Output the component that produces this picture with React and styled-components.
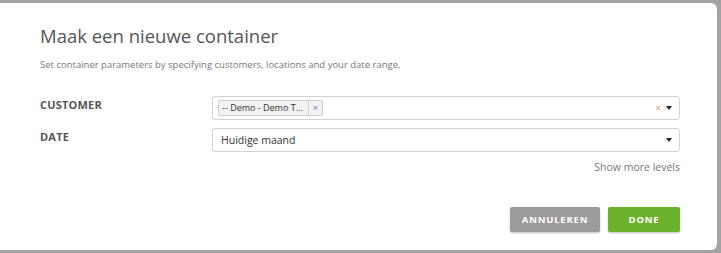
import React from "react";
import styled, { createGlobalStyle } from "styled-components";

const Global = createGlobalStyle`
  html, body { margin: 0; padding: 0; background: #a3a3a3; overflow: hidden; }
  body { font-family: "Open Sans", "Noto Sans", sans-serif; }
`;

const Backdrop = styled.div`
  width: 721px;
  height: 253px;
  background: #a3a3a3;
  padding-top: 3px;
  box-sizing: border-box;
`;

const Modal = styled.div`
  margin-left: -8px;
  width: 725px;
  height: 247px;
  background: #fff;
  border-radius: 6px;
  box-sizing: border-box;
  padding: 21px 37px 0 48px;
  display: flex;
  flex-direction: column;
`;

const Title = styled.h1`
  margin: 0;
  font-size: 18.5px;
  font-weight: 400;
  color: #555;
  line-height: 24px;
`;

const Subtitle = styled.p`
  margin: 10px 0 0;
  font-size: 9.5px;
  color: #777;
  line-height: 14px;
`;

const Form = styled.div`
  margin-top: 24px;
  display: flex;
  flex-direction: column;
  gap: 8px;
`;

const Row = styled.div`
  display: flex;
  align-items: flex-start;
`;

const Label = styled.label`
  width: 172px;
  padding-top: 1px;
  line-height: 15px;
  font-size: 11px;
  font-weight: 700;
  color: #555;
  letter-spacing: 0.2px;
  text-transform: uppercase;
`;

const Select = styled.div`
  flex: 1;
  height: 24px;
  box-sizing: border-box;
  border: 1px solid #d3d3d3;
  border-radius: 3px;
  display: flex;
  align-items: center;
  padding: 0 6px 0 ${(p) => (p.$tags ? "5px" : "8px")};
  font-size: 10.5px;
  color: #333;
`;

const Value = styled.span`
  flex: 1;
`;

const Tag = styled.span`
  display: flex;
  align-items: center;
  height: 16px;
  box-sizing: border-box;
  border: 1px solid #d0d0d0;
  border-radius: 2px;
  background: #f2f2f2;
  font-size: 9px;
  color: #333;
`;

const TagText = styled.span`
  padding: 0 5px 0 3px;
  line-height: 14px;
  border-right: 1px solid #d0d0d0;
`;

const TagX = styled.span`
  padding: 0 4px;
  color: #5a8fc7;
  font-size: 9px;
  line-height: 14px;
`;

const Spacer = styled.span`
  flex: 1;
`;

const Clear = styled.span`
  color: #c9a86a;
  font-size: 10px;
  margin-right: 5px;
`;

const Caret = styled.span`
  width: 0;
  height: 0;
  border-left: 3.5px solid transparent;
  border-right: 3.5px solid transparent;
  border-top: 4px solid #222;
  margin-right: 1px;
`;

const More = styled.div`
  margin-top: 8px;
  text-align: right;
  font-size: 10.5px;
  color: #777;
`;

const Footer = styled.div`
  margin-top: 33px;
  display: flex;
  justify-content: flex-end;
  gap: 8px;
`;

const Button = styled.button`
  height: 25px;
  width: ${(p) => p.$w}px;
  border: none;
  border-radius: 2px;
  background: ${(p) => p.$bg};
  color: #fff;
  font-family: "Open Sans", sans-serif;
  font-size: 9.5px;
  font-weight: 700;
  letter-spacing: 0.8px;
  box-shadow: 0 1px 2px rgba(0,0,0,0.25);
  padding: 0;
`;

export default function App() {
  return (
    <>
      <Global />
      <Backdrop>
        <Modal>
          <Title>Maak een nieuwe container</Title>
          <Subtitle>
            Set container parameters by specifying customers, locations and your date range.
          </Subtitle>
          <Form>
            <Row>
              <Label>Customer</Label>
              <Select $tags>
                <Tag>
                  <TagText>-- Demo - Demo T...</TagText>
                  <TagX>×</TagX>
                </Tag>
                <Spacer />
                <Clear>×</Clear>
                <Caret />
              </Select>
            </Row>
            <Row>
              <Label>Date</Label>
              <Select>
                <Value>Huidige maand</Value>
                <Caret />
              </Select>
            </Row>
          </Form>
          <More>Show more levels</More>
          <Footer>
            <Button $bg="#9b9b9b" $w={90}>ANNULEREN</Button>
            <Button $bg="#6cb12b" $w={72}>DONE</Button>
          </Footer>
        </Modal>
      </Backdrop>
    </>
  );
}
